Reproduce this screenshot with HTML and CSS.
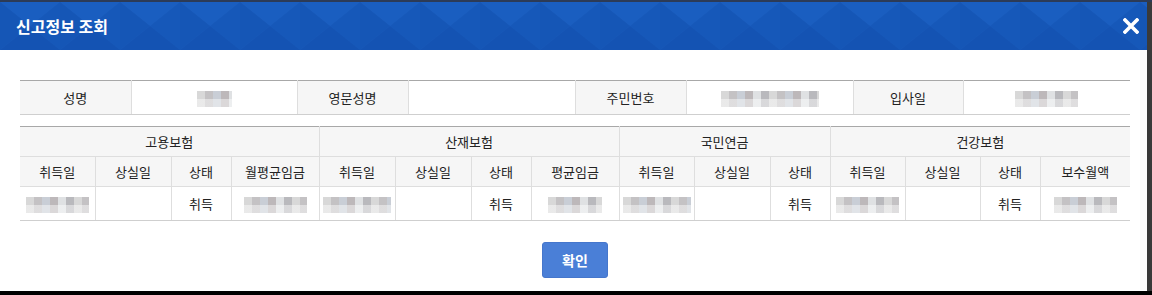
FILE: index.html
```html
<!DOCTYPE html>
<html>
    <head>
        <title>신고정보 조회</title>
        <meta charset="utf-8" />
        <link rel="stylesheet" href="styles.css">
    </head>
    <body>
        <div class="dialog">
            <div class="dialogHead">
                <h2>신고정보 조회</h2>
                <span class="close">
                    <svg width="16" height="16" viewBox="0 0 16 16"><path d="M2 2L14 14M14 2L2 14" stroke="#fff" stroke-width="3.6" stroke-linecap="square"/></svg>
                </span>
            </div>

            <div class="dialogBody">
                <table class="info">
                    <colgroup>
                        <col style="width:111px"><col style="width:166px">
                        <col style="width:111px"><col style="width:167px">
                        <col style="width:111px"><col style="width:167px">
                        <col style="width:110px"><col style="width:167px">
                    </colgroup>
                    <tr>
                        <th>성명</th><td><span class="blur name"></span></td>
                        <th>영문성명</th><td></td>
                        <th>주민번호</th><td><span class="blur ssn"></span></td>
                        <th>입사일</th><td><span class="blur"></span></td>
                    </tr>
                </table>

                <table class="insure">
                    <colgroup>
                        <col style="width:75px"><col style="width:76px"><col style="width:60px"><col style="width:88px">
                        <col style="width:76px"><col style="width:76px"><col style="width:60px"><col style="width:88px">
                        <col style="width:75px"><col style="width:76px"><col style="width:60px">
                        <col style="width:75px"><col style="width:75px"><col style="width:60px"><col style="width:90px">
                    </colgroup>
                    <tr class="group">
                        <th colspan="4">고용보험</th>
                        <th colspan="4">산재보험</th>
                        <th colspan="3">국민연금</th>
                        <th colspan="4">건강보험</th>
                    </tr>
                    <tr class="sub">
                        <th>취득일</th><th>상실일</th><th>상태</th><th>월평균임금</th>
                        <th>취득일</th><th>상실일</th><th>상태</th><th>평균임금</th>
                        <th>취득일</th><th>상실일</th><th>상태</th>
                        <th>취득일</th><th>상실일</th><th>상태</th><th>보수월액</th>
                    </tr>
                    <tr class="data">
                        <td><span class="blur"></span></td><td></td><td>취득</td><td><span class="blur"></span></td>
                        <td><span class="blur wide"></span></td><td></td><td>취득</td><td><span class="blur mid"></span></td>
                        <td><span class="blur wide"></span></td><td></td><td>취득</td>
                        <td><span class="blur"></span></td><td></td><td>취득</td><td><span class="blur"></span></td>
                    </tr>
                </table>

                <div class="actions">
                    <button type="button" class="ok">확인</button>
                </div>
            </div>
        </div>
    </body>
</html>
```

FILE: styles.css
```css
body {
    background:         linear-gradient(#2c3b57 0 2px, #3a3a3a 2px 291px, #000 291px);
    margin:             0;
    font-family:        "Noto Sans CJK KR", "Noto Sans", sans-serif;
    font-size:          13px;
    color:              #222;
    min-height:         295px;
}

.dialog {
    background:         #fff;
    margin-top:         2px;
    width:              1147px;
    height:             289px;
}

/* Blue header with a faint triangle pattern */
.dialogHead {
    background-color:   #1658b9;
    background-image:   url("data:image/svg+xml;utf8,<svg xmlns='http://www.w3.org/2000/svg' width='60' height='48'><path d='M0 0L30 24L60 0Z' fill='%231a5ec0'/><path d='M0 48L30 24L60 48Z' fill='%231453b3'/><path d='M30 24L0 48L0 0Z' fill='%231556b6'/></svg>");
    height:             48px;
    display:            flex;
    align-items:        center;
    justify-content:    space-between;
    padding:            0 8px 0 16px;
}

.dialogHead h2 {
    color:              #fff;
    font-size:          16px;
    font-weight:        bold;
    margin:             0;
}

.dialogHead .close {
    display:            flex;
    width:              16px;
    height:             16px;
}

.dialogBody {
    padding:            30px 17px 0 20px;
}

/* Tables */
table {
    border-collapse:    collapse;
    table-layout:       fixed;
    width:              1110px;
}

table th, table td {
    border:             1px solid #dedede;
    text-align:         center;
    font-weight:        normal;
    padding:            0;
}

table tr:first-child th, table tr:first-child td {
    border-top:         1px solid #a8a8a8;
}

table tr th:first-child, table tr td:first-child {
    border-left:        none;
}

table tr th:last-child, table tr td:last-child {
    border-right:       none;
}

table tr:last-child th, table tr:last-child td {
    border-bottom:      1px solid #cfcfcf;
}

table th {
    background:         #f6f6f6;
}

.info tr {
    height:             34px;
}

.insure {
    margin-top:         11px;
}

.insure tr.group, .insure tr.sub {
    height:             30px;
}

.insure tr.data {
    height:             34px;
}

/* Masked values */
.blur {
    display:            inline-block;
    vertical-align:     middle;
    width:              63px;
    height:             16px;
    background-image:
        linear-gradient(180deg, rgba(255,255,255,0) 50%, rgba(255,255,255,0.45) 50%),
        repeating-linear-gradient(90deg, #d8d8d8 0 8px, #c4c2c4 8px 16px, #c9ced6 16px 24px, #bdb8ba 24px 32px, #dfe1e3 32px 40px, #b9b9bd 40px 48px);
}

.blur.name {
    width:              35px;
}

.blur.ssn {
    width:              98px;
}

.blur.wide {
    width:              68px;
}

.blur.mid {
    width:              54px;
}

/* Footer button */
.actions {
    display:            flex;
    justify-content:    center;
    margin-top:         21px;
}

.ok {
    background:         #4a7fd7;
    border:             1px solid #4576cc;
    border-radius:      3px;
    color:              #fff;
    font-family:        "Noto Sans CJK KR", sans-serif;
    font-size:          14px;
    font-weight:        bold;
    width:              66px;
    height:             36px;
}
```
